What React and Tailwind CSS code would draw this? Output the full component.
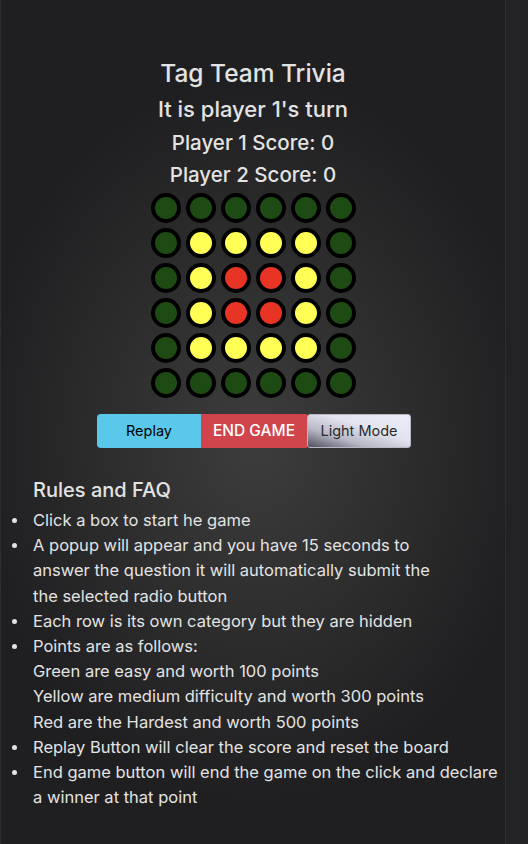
import React from 'react';

const G = 'bg-[#1e4b14]';
const Y = 'bg-[#ffff55]';
const R = 'bg-[#e83424]';

const board = [
    [G, G, G, G, G, G],
    [G, Y, Y, Y, Y, G],
    [G, Y, R, R, Y, G],
    [G, Y, R, R, Y, G],
    [G, Y, Y, Y, Y, G],
    [G, G, G, G, G, G],
];

const rules = [
    ['Click a box to start he game'],
    ['A popup will appear and you have 15 seconds to', 'answer the question it will automatically submit the', 'the selected radio button'],
    ['Each row is its own category but they are hidden'],
    ['Points are as follows:', 'Green are easy and worth 100 points', 'Yellow are medium difficulty and worth 300 points', 'Red are the Hardest and worth 500 points'],
    ['Replay Button will clear the score and reset the board'],
    ['End game button will end the game on the click and declare', 'a winner at that point'],
];

const App = () => {
    return (
        <div className="flex min-h-[844px] bg-[#232325] text-[#e3e3e3]" style={{ fontFamily: 'Inter, "Noto Sans", sans-serif' }}>
            <div className="w-[506px] shrink-0 border-x border-[#2e2e30] bg-[radial-gradient(ellipse_280px_360px_at_255px_440px,#3d3d3d,#1f1f21)]">
                <div className="flex flex-col items-center pt-[57px]">
                    <h1 className="text-[24.5px] leading-[32px] font-medium">Tag Team Trivia</h1>
                    <h2 className="mt-[5px] text-[22px] leading-[30px] font-medium">It is player 1's turn</h2>
                    <p className="mt-[3px] text-[20.5px] leading-[32px] font-medium">Player 1 Score: 0</p>
                    <p className="text-[20.5px] leading-[32px] font-medium">Player 2 Score: 0</p>
                    <div className="mt-[2px] grid grid-cols-6 gap-[5px]">
                        {board.flat().map((c, i) => (
                            <div key={i} className={`h-[30px] w-[30px] rounded-full border-[4px] border-black ${c}`} />
                        ))}
                    </div>
                    <div className="mt-[16px] flex ml-[2px]">
                        <button className="h-[34px] w-[104px] rounded-l-[4px] bg-[#5ac8eb] text-[14.5px] text-black">Replay</button>
                        <button className="h-[34px] w-[106px] bg-[#d0454c] text-[15.5px] font-medium text-white">END GAME</button>
                        <button className="h-[34px] w-[104px] rounded-[3px] border border-[#b8b8c4] bg-[linear-gradient(to_top_right,#4e4e5c,#b8b8c6_30%,#e4e4f0_60%,#ececf8)] text-[14.5px] text-[#2a2a2a]">Light Mode</button>
                    </div>
                </div>
                <div className="mt-[27px]">
                    <h3 className="pl-[32px] text-[20px] leading-[30px] font-medium">Rules and FAQ</h3>
                    <ul className="mt-[3px] text-[16.5px] leading-[25.2px]">
                        {rules.map((lines, i) => (
                            <li key={i} className="flex">
                                <div className="flex h-[25.2px] w-[32px] shrink-0 items-center pl-[11px]">
                                    <span className="h-[5px] w-[5px] rounded-full bg-[#e3e3e3]" />
                                </div>
                                <div>
                                    {lines.map((l, j) => (
                                        <div key={j}>{l}</div>
                                    ))}
                                </div>
                            </li>
                        ))}
                    </ul>
                </div>
            </div>
            <div className="flex-1" />
        </div>
    );
};

export default App;
